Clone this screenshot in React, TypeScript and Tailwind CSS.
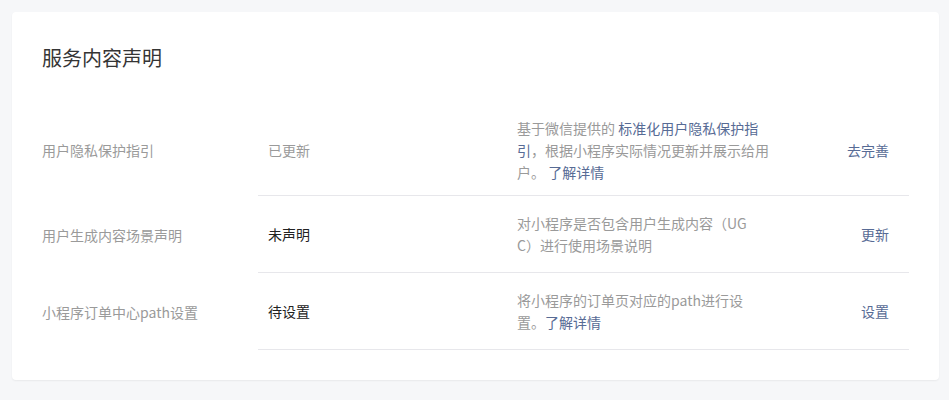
const link = "text-[#576b95]";

type Row = {
  label: string;
  status: string;
  statusDone?: boolean;
  desc: React.ReactNode;
  action: string;
  pad: string;
};

const rows: Row[] = [
  {
    label: "用户隐私保护指引",
    status: "已更新",
    statusDone: true,
    desc: (
      <>
        基于微信提供的 <a className={link}>标准化用户隐私保护指引</a>，根据小程序实际情况更新并展示给用户。{" "}
        <a className={link}>了解详情</a>
      </>
    ),
    action: "去完善",
    pad: "pt-[13px] pb-[12px]",
  },
  {
    label: "用户生成内容场景声明",
    status: "未声明",
    desc: (
      <>
        对小程序是否包含用户生成内容（UG
        <br />
        C）进行使用场景说明
      </>
    ),
    action: "更新",
    pad: "py-4",
  },
  {
    label: "小程序订单中心path设置",
    status: "待设置",
    desc: (
      <>
        将小程序的订单页对应的path进行设置。<a className={link}>了解详情</a>
      </>
    ),
    action: "设置",
    pad: "py-4",
  },
];

const App = () => {
  return (
    <div
      className="min-h-[400px] bg-[#f6f7f9] pt-3 pl-3 pr-[10px] pb-3 text-[14px] leading-[22px]"
      style={{ fontFamily: '"Microsoft YaHei", "Noto Sans CJK SC", sans-serif' }}
    >
      <div className="bg-white rounded shadow-[0_1px_2px_rgba(0,0,0,0.06)] px-[30px] pt-[30px] pb-[30px]">
        <h2 className="text-[20px] leading-[32px] text-[#353535] mb-[30px]">服务内容声明</h2>

        <div>
          {rows.map((row) => (
            <div key={row.label} className="flex items-stretch">
              <div className="w-[216px] flex items-center text-[#9a9a9a]">{row.label}</div>
              <div className={`flex flex-1 items-center border-b border-[#e7e7eb] ${row.pad}`}>
                <div
                  className={`w-[249px] pl-[10px] ${row.statusDone ? "text-[#9a9a9a]" : "text-[#222222]"}`}
                >
                  {row.status}
                </div>
                <div className="w-[272px] px-[10px] text-[#9a9a9a] break-all">{row.desc}</div>
                <div className="flex-1 text-right pr-5">
                  <a className={link}>{row.action}</a>
                </div>
              </div>
            </div>
          ))}
        </div>
      </div>
    </div>
  );
};

export default App;
